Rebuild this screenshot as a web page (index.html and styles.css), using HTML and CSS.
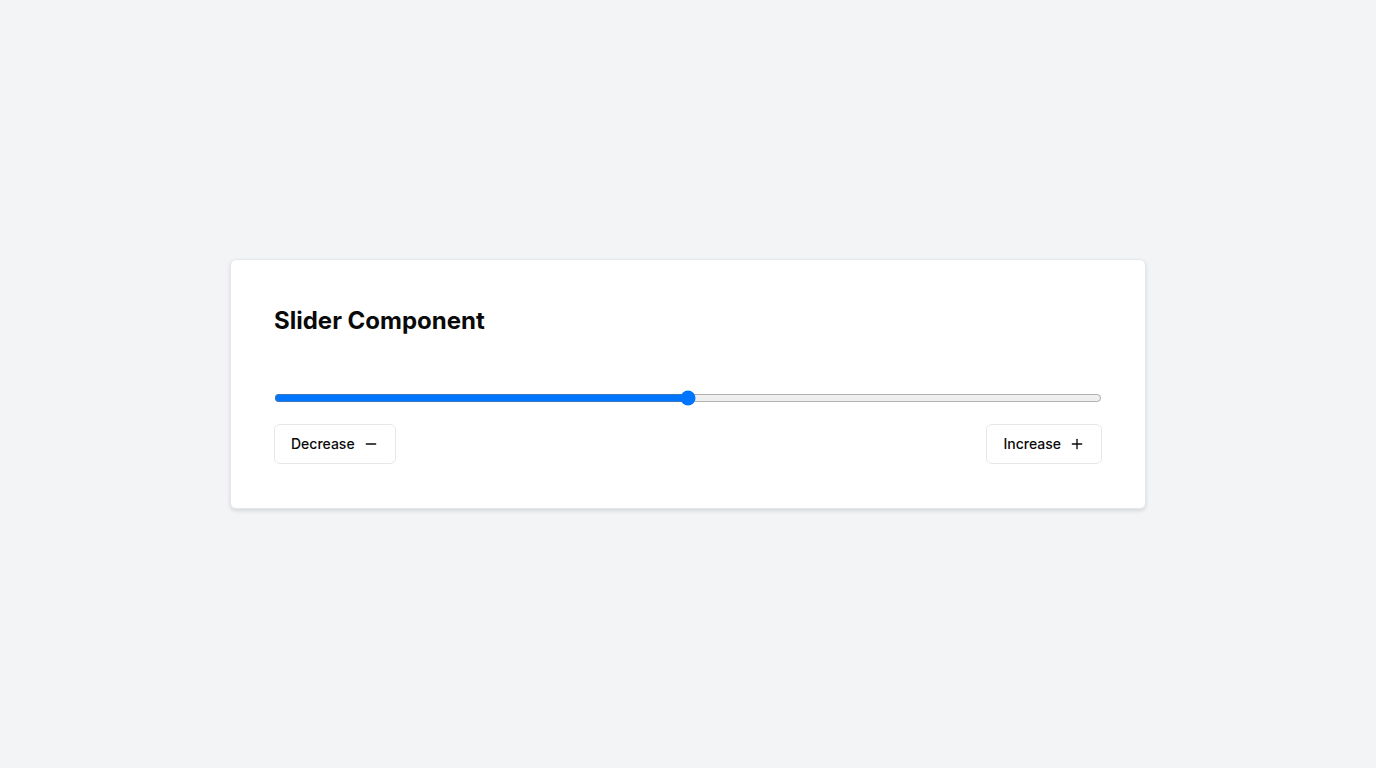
FILE: index.html
```html
<!DOCTYPE html>
<html lang="en">
<head>
<meta charset="utf-8">
<title>Slider Component</title>
<link rel="stylesheet" href="styles.css">
</head>
<body>
<main class="page">
  <section class="card">
    <h2 class="title">Slider Component</h2>
    <div class="slider-wrap">
      <input class="slider" type="range" min="0" max="100" value="50" aria-label="Value">
    </div>
    <div class="actions">
      <button class="btn" type="button">Decrease
        <svg class="icon" viewBox="0 0 24 24" width="16" height="16" fill="none" stroke="currentColor" stroke-width="2" stroke-linecap="round" stroke-linejoin="round"><path d="M5 12h14"/></svg>
      </button>
      <button class="btn" type="button">Increase
        <svg class="icon" viewBox="0 0 24 24" width="16" height="16" fill="none" stroke="currentColor" stroke-width="2" stroke-linecap="round" stroke-linejoin="round"><path d="M5 12h14"/><path d="M12 5v14"/></svg>
      </button>
    </div>
  </section>
</main>
</body>
</html>
```
FILE: styles.css
```css
* { box-sizing: border-box; }
html, body { margin: 0; padding: 0; }
body {
  background: #f3f4f6;
  font-family: Inter, "Noto Sans", sans-serif;
  color: #0a0a0a;
}
.page {
  min-height: 768px;
  display: flex;
  align-items: center;
  justify-content: center;
}
.card {
  width: 916px;
  background: #fff;
  border: 1px solid #e5e7eb;
  border-radius: 6px;
  box-shadow: 0 2px 4px rgba(0,0,0,0.12);
  padding: 45px 43px 44px;
}
.title {
  margin: 0;
  font-size: 24px;
  line-height: 32px;
  font-weight: 700;
}
.slider-wrap {
  margin-top: 53px;
}
.slider {
  display: block;
  width: 100%;
  margin: 2px 0;
  accent-color: #0075ff;
}
.actions {
  margin-top: 18px;
  display: flex;
  justify-content: space-between;
}
.btn {
  display: inline-flex;
  align-items: center;
  gap: 8px;
  height: 40px;
  padding: 0 16px 1px;
  background: #fff;
  border: 1px solid #e5e7eb;
  border-radius: 6px;
  font-family: inherit;
  font-size: 14px;
  font-weight: 500;
  color: #0a0a0a;
}
.icon { display: block; }
```
